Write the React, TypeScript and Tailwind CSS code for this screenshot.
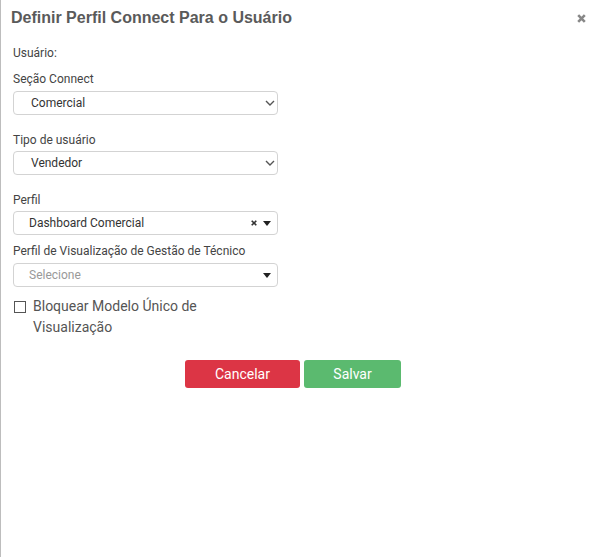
import React from "react";

const Chevron = () => (
  <svg width="10" height="10" viewBox="0 0 10 10" className="shrink-0">
    <path d="M1 3 L5 7 L9 3" fill="none" stroke="#555" strokeWidth="1.4" />
  </svg>
);

const Caret = () => (
  <svg width="8" height="5" viewBox="0 0 8 5" className="shrink-0">
    <path d="M0 0 L8 0 L4 5 Z" fill="#222" />
  </svg>
);

const Clear = () => (
  <svg width="6" height="6" viewBox="0 0 6 6" className="shrink-0">
    <path d="M0.7 0.7 L5.3 5.3 M5.3 0.7 L0.7 5.3" stroke="#333" strokeWidth="1.6" />
  </svg>
);

const Label = ({ children }: { children: React.ReactNode }) => (
  <div className="h-[15px] leading-[15px] text-[#444]">{children}</div>
);

const Box = ({ children, native }: { children: React.ReactNode; native?: boolean }) => (
  <div
    className={
      native
        ? "w-[265px] h-[24px] border border-[#d3d3d3] rounded-[4px] pl-[17px] pr-[2px] flex items-center gap-[6px]"
        : "w-[265px] h-[24px] border border-[#d3d3d3] rounded-[4px] pl-[15px] pr-[6px] flex items-center gap-[6px]"
    }
  >
    {children}
  </div>
);

export default function App() {
  return (
    <div
      className="w-[593px] h-[557px] bg-white border-l border-[#bdbdbd] text-[#333] flex flex-col"
      style={{ fontFamily: "Roboto, 'Liberation Sans', sans-serif" }}
    >
      <div className="flex items-center justify-between pl-[10px] pr-[7px] h-[36px] shrink-0">
        <h1
          className="text-[16px] leading-[24px] font-bold text-[#5a5a5a]"
          style={{ fontFamily: "'Liberation Sans', Arial, sans-serif" }}
        >
          Definir Perfil Connect Para o Usuário
        </h1>
        <svg width="9" height="9" viewBox="0 0 9 9">
          <path d="M1.2 1.2 L7.8 7.8 M7.8 1.2 L1.2 7.8" stroke="#888" strokeWidth="2.6" />
        </svg>
      </div>

      <div className="pl-[12px] text-[12px] flex flex-col">
        <div className="mt-[10px]">
          <Label>Usuário:</Label>
        </div>

        <div className="mt-[11px] flex flex-col gap-[4px]">
          <Label>Seção Connect</Label>
          <Box native>
            <span className="flex-1 leading-[22px] text-[#333]">Comercial</span>
            <Chevron />
          </Box>
        </div>

        <div className="mt-[18px] flex flex-col gap-[3px]">
          <Label>Tipo de usuário</Label>
          <Box native>
            <span className="flex-1 leading-[22px] text-[#333]">Vendedor</span>
            <Chevron />
          </Box>
        </div>

        <div className="mt-[18px] flex flex-col gap-[3px]">
          <Label>Perfil</Label>
          <Box>
            <span className="flex-1 leading-[22px] text-[#333]">Dashboard Comercial</span>
            <Clear />
            <Caret />
          </Box>
        </div>

        <div className="mt-[9px] flex flex-col gap-[4px]">
          <Label>Perfil de Visualização de Gestão de Técnico</Label>
          <Box>
            <span className="flex-1 leading-[22px] text-[#999]">Selecione</span>
            <Caret />
          </Box>
        </div>

        <label className="mt-[9px] flex items-start gap-[7px]">
          <span className="mt-[5px] ml-[1px] w-[12px] h-[12px] border border-[#555] bg-white shrink-0" />
          <span className="w-[180px] text-[14px] leading-[21px] text-[#555]">
            Bloquear Modelo Único de Visualização
          </span>
        </label>
      </div>

      <div className="mt-[22px] flex justify-center gap-[4px] pr-[8px]">
        <button className="w-[115px] h-[28px] rounded-[3px] bg-[#dc3545] text-white text-[14px]">Cancelar</button>
        <button className="w-[97px] h-[28px] rounded-[3px] bg-[#5bba6f] text-white text-[14px]">Salvar</button>
      </div>
    </div>
  );
}
